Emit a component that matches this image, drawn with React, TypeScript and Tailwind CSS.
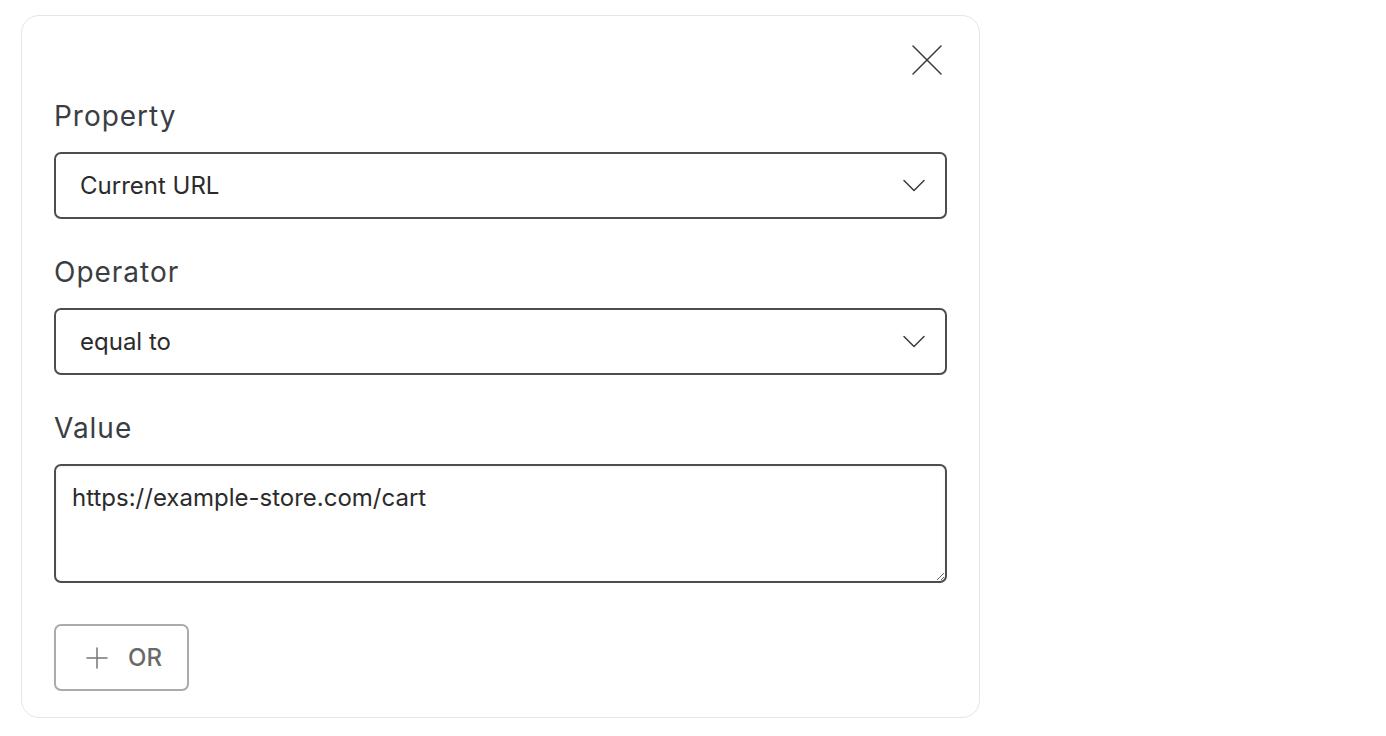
function Label({ children }: { children: React.ReactNode }) {
  return <div className="text-[28px] leading-[36px] tracking-[0.035em] text-[#3a3e42]">{children}</div>
}

function Chevron() {
  return (
    <svg width="24" height="13" viewBox="0 0 24 13" fill="none" className="text-[#3b3b3b]">
      <path d="M2 1.5 L12 11.5 L22 1.5" stroke="currentColor" strokeWidth="1.5" strokeLinecap="round" strokeLinejoin="round" />
    </svg>
  )
}

function Select({ value }: { value: string }) {
  return (
    <div className="flex h-[67px] items-center justify-between rounded-[7px] border-2 border-[#4d4d4d] pl-[24px] pr-[19px]">
      <span className="text-[24px] text-[#2b2b2b]">{value}</span>
      <Chevron />
    </div>
  )
}

export default function App() {
  return (
    <div className="min-h-screen bg-white pl-[21px] pt-[15px] font-['Inter',sans-serif]">
      <div className="flex h-[703px] w-[959px] flex-col rounded-[18px] border border-[#e5e5e5] px-[32px] pt-[29px]">
        <div className="flex justify-end pr-[5px]">
          <svg width="30" height="30" viewBox="0 0 30 30" fill="none" className="text-[#3b3b3b]">
            <path d="M1 1 L29 29 M29 1 L1 29" stroke="currentColor" strokeWidth="1.5" strokeLinecap="round" />
          </svg>
        </div>
        <div className="mt-[23px] flex flex-col">
          <Label>Property</Label>
          <div className="mt-[18px]">
            <Select value="Current URL" />
          </div>
          <div className="mt-[35px]">
            <Label>Operator</Label>
          </div>
          <div className="mt-[18px]">
            <Select value="equal to" />
          </div>
          <div className="mt-[35px]">
            <Label>Value</Label>
          </div>
          <textarea
            readOnly
            defaultValue="https://example-store.com/cart"
            className="mt-[18px] h-[119px] w-full resize-y rounded-[7px] border-2 border-[#4d4d4d] px-[16px] py-[16px] text-[24px] leading-[32px] text-[#2b2b2b] shadow-[inset_0_1px_3px_rgba(0,0,0,0.06)] outline-none"
          />
          <div className="mt-[41px]">
            <button className="flex h-[67px] w-[135px] items-center gap-[20px] rounded-[7px] border-2 border-[#ababab] pl-[30px] text-[24px] font-medium text-[#6a6a6a]">
              <svg width="22" height="22" viewBox="0 0 22 22" fill="none" className="text-[#777777]">
                <path d="M11 1 V21 M1 11 H21" stroke="currentColor" strokeWidth="1.5" strokeLinecap="round" />
              </svg>
              OR
            </button>
          </div>
        </div>
      </div>
    </div>
  )
}
